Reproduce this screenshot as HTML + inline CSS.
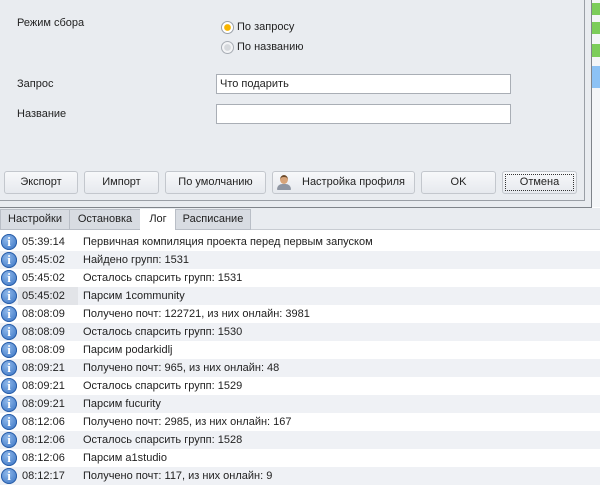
<html><head><style>
body{margin:0;width:600px;height:483px;overflow:hidden;background:#fff;font-family:"Liberation Sans",sans-serif;font-size:11px;color:#222;position:relative}
.a{position:absolute}
.btn{position:absolute;top:171px;height:21px;border:1px solid #c3c7cd;border-radius:3px;background:linear-gradient(#f7f8fa,#e6e9ee);text-align:center;line-height:21px;font-size:11px}
.tab{position:absolute;top:209px;height:19px;line-height:19px;border:1px solid #b9bec6;background:#d8dce2;text-align:center;font-size:11px}
.row{position:absolute;left:0;width:600px;height:18px;line-height:18px;font-size:11px}
.row .ic{position:absolute;left:1px;top:1px;width:16px;height:16px;border-radius:50%;background:radial-gradient(circle at 40% 35%,#8fb8ea,#2f6cc0);box-shadow:inset 0 0 0 1px #2a5ea8;color:#fff;font-weight:bold;text-align:center;line-height:16px;font-family:"Liberation Serif",serif;font-size:13px}
.row .t{position:absolute;left:22px}
.row .m{position:absolute;left:83px}
.alt{background:#eff1f5}
</style></head><body>
<div class="a" style="left:0;top:0;width:591px;height:207px;background:#e9ecf0;border-right:1px solid #7f848a;border-bottom:1px solid #7f848a"></div>
<div class="a" style="left:0;top:0;width:584px;height:200px;border-right:1px solid #9a9fa6;border-bottom:1px solid #9a9fa6"></div>
<div class="a" style="left:592px;top:0;width:8px;height:207px;background:#f4f6f8"></div>
<div class="a" style="left:592px;top:3px;width:8px;height:12px;background:#7ccd5a"></div>
<div class="a" style="left:592px;top:22px;width:8px;height:12px;background:#7ccd5a"></div>
<div class="a" style="left:592px;top:44px;width:8px;height:13px;background:#7ccd5a"></div>
<div class="a" style="left:592px;top:66px;width:8px;height:22px;background:#8cc2f5"></div>
<div class="a" style="left:17px;top:17px">Режим сбора</div>
<div class="a" style="left:221px;top:21px;width:11px;height:11px;border-radius:50%;border:1px solid #9aa0a8;background:radial-gradient(#f7b400 38%,#fff 48%)"></div>
<div class="a" style="left:237px;top:21px">По запросу</div>
<div class="a" style="left:221px;top:41px;width:11px;height:11px;border-radius:50%;border:1px solid #a8adb4;background:radial-gradient(#d6d9dd 38%,#f3f4f6 48%)"></div>
<div class="a" style="left:237px;top:41px">По названию</div>
<div class="a" style="left:17px;top:78px">Запрос</div>
<div class="a" style="left:216px;top:74px;width:290px;height:18px;border:1px solid #a9aeb5;background:#fff;line-height:18px;padding-left:3px">Что подарить</div>
<div class="a" style="left:17px;top:108px">Название</div>
<div class="a" style="left:216px;top:104px;width:293px;height:18px;border:1px solid #a9aeb5;background:#fff"></div>
<div class="btn" style="left:4px;width:72px">Экспорт</div>
<div class="btn" style="left:84px;width:73px">Импорт</div>
<div class="btn" style="left:165px;width:99px">По умолчанию</div>
<div class="btn" style="left:272px;width:141px"><span style="position:absolute;left:4px;top:3px;width:14px;height:15px"><span style="position:absolute;left:3px;top:0;width:8px;height:9px;border-radius:50%;background:#d7a47a;border-top:2px solid #6b4a2a;box-sizing:border-box"></span><span style="position:absolute;left:0;top:9px;width:14px;height:6px;border-radius:6px 6px 1px 1px;background:#8f96a3"></span></span><span style="padding-left:20px">Настройка профиля</span></div>
<div class="btn" style="left:421px;width:73px">OK</div>
<div class="btn" style="left:502px;width:73px"><span style="position:absolute;left:2px;top:2px;right:2px;bottom:2px;border:1px dotted #333;line-height:15px">Отмена</span></div>
<div class="a" style="left:0;top:208px;width:600px;height:21px;background:#e9ecf0;border-bottom:1px solid #c8ccd2"></div>
<div class="tab" style="left:0;width:68px">Настройки</div>
<div class="tab" style="left:69px;width:70px">Остановка</div>
<div class="tab" style="left:140px;width:34px;background:#fff;border-color:#fff;height:21px">Лог</div>
<div class="tab" style="left:175px;width:74px">Расписание</div>
<div class="row" style="top:233px"><div class="ic">i</div><span class="t">05:39:14</span><span class="m">Первичная компиляция проекта перед первым запуском</span></div>
<div class="row alt" style="top:251px"><div class="ic">i</div><span class="t">05:45:02</span><span class="m">Найдено групп: 1531</span></div>
<div class="row" style="top:269px"><div class="ic">i</div><span class="t">05:45:02</span><span class="m">Осталось спарсить групп: 1531</span></div>
<div class="row alt" style="top:287px"><div class="a" style="left:18px;top:0;width:60px;height:18px;background:#e2e4e8"></div><div class="ic">i</div><span class="t">05:45:02</span><span class="m">Парсим 1community</span></div>
<div class="row" style="top:305px"><div class="ic">i</div><span class="t">08:08:09</span><span class="m">Получено почт: 122721, из них онлайн: 3981</span></div>
<div class="row alt" style="top:323px"><div class="ic">i</div><span class="t">08:08:09</span><span class="m">Осталось спарсить групп: 1530</span></div>
<div class="row" style="top:341px"><div class="ic">i</div><span class="t">08:08:09</span><span class="m">Парсим podarkidlj</span></div>
<div class="row alt" style="top:359px"><div class="ic">i</div><span class="t">08:09:21</span><span class="m">Получено почт: 965, из них онлайн: 48</span></div>
<div class="row" style="top:377px"><div class="ic">i</div><span class="t">08:09:21</span><span class="m">Осталось спарсить групп: 1529</span></div>
<div class="row alt" style="top:395px"><div class="ic">i</div><span class="t">08:09:21</span><span class="m">Парсим fucurity</span></div>
<div class="row" style="top:413px"><div class="ic">i</div><span class="t">08:12:06</span><span class="m">Получено почт: 2985, из них онлайн: 167</span></div>
<div class="row alt" style="top:431px"><div class="ic">i</div><span class="t">08:12:06</span><span class="m">Осталось спарсить групп: 1528</span></div>
<div class="row" style="top:449px"><div class="ic">i</div><span class="t">08:12:06</span><span class="m">Парсим a1studio</span></div>
<div class="row alt" style="top:467px"><div class="ic">i</div><span class="t">08:12:17</span><span class="m">Получено почт: 117, из них онлайн: 9</span></div>
</body></html>
